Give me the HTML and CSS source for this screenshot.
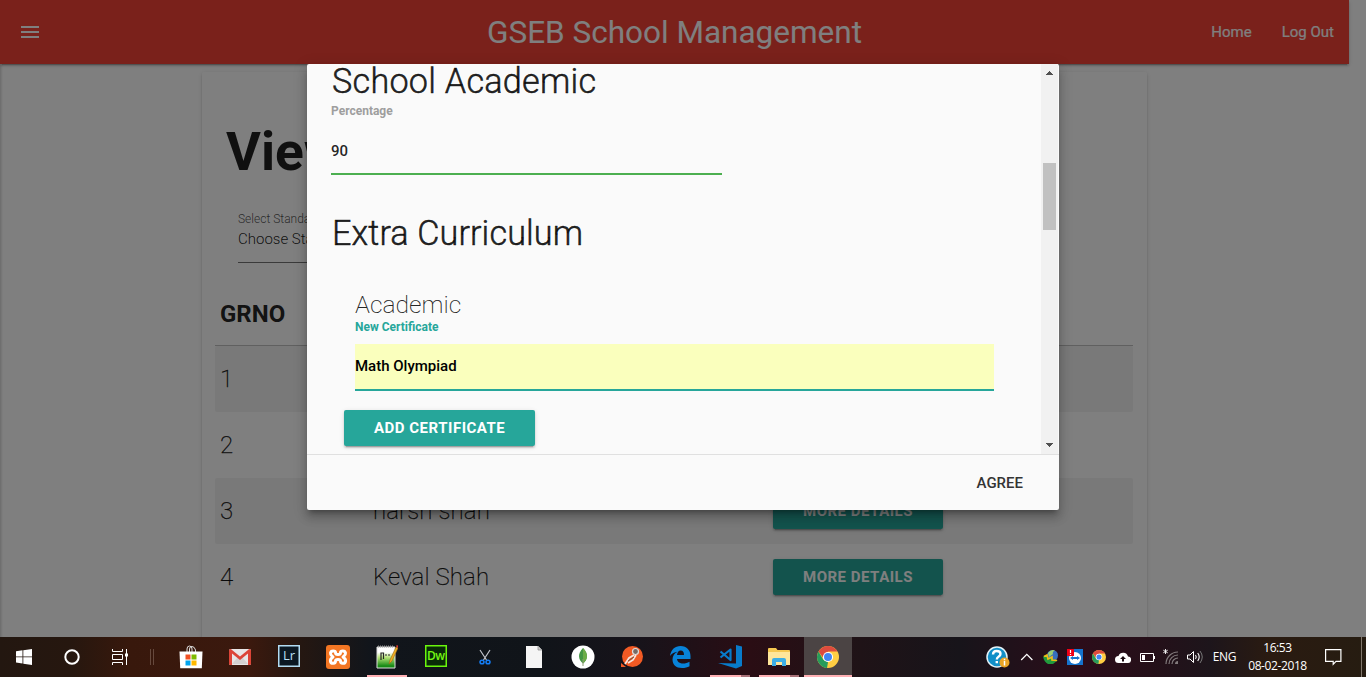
FILE: index.html
```html
<!DOCTYPE html>
<html lang="en">
<head>
<meta charset="utf-8">
<title>GSEB School Management</title>
<link rel="stylesheet" href="styles.css">
</head>
<body>
<div class="desktop">
  <div class="viewport">
    <div class="page">
      <nav class="navbar">
        <svg class="menu-icon" viewBox="0 0 18 12"><path d="M0 0h18v2H0zM0 5h18v2H0zM0 10h18v2H0z"/></svg>
        <span class="brand">GSEB School Management</span>
        <div class="nav-links"><a>Home</a><a>Log Out</a></div>
      </nav>
      <main class="card">
        <h2 class="page-title">View</h2>
        <div class="select-field">
          <label class="select-label">Select Standard</label>
          <div class="select-value">Choose Standard</div>
        </div>
        <div class="table">
          <div class="row head"><span>GRNO</span><span></span><span></span></div>
          <div class="row odd"><span>1</span><span></span><span></span></div>
          <div class="row"><span>2</span><span></span><span></span></div>
          <div class="row odd"><span>3</span><span>harsh shah</span><span><button class="btn">More Details</button></span></div>
          <div class="row"><span>4</span><span>Keval Shah</span><span><button class="btn">More Details</button></span></div>
        </div>
      </main>
    </div>
    <div class="overlay"></div>
    <section class="modal">
      <div class="modal-body">
        <div class="modal-content">
          <h4 class="section-title">School Academic</h4>
          <label class="field-label">Percentage</label>
          <div class="field valid">90</div>
          <h4 class="section-title second">Extra Curriculum</h4>
          <div class="subsection">
            <h5 class="sub-title">Academic</h5>
            <label class="field-label active">New Certificate</label>
            <div class="field autofill">Math Olympiad</div>
          </div>
          <button class="btn add">Add Certificate</button>
        </div>
        <div class="scrollbar">
          <svg class="arrow" viewBox="0 0 7 4" shape-rendering="crispEdges"><path d="M3 0h1v1h1v1h1v1h1v1H0V3h1V2h1V1h1z"/></svg>
          <div class="track"><div class="thumb"></div></div>
          <svg class="arrow" viewBox="0 0 7 4" shape-rendering="crispEdges"><path d="M0 0h7v1H6v1H5v1H4v1H3V3H2V2H1V1H0z"/></svg>
        </div>
      </div>
      <footer class="modal-footer"><span>Agree</span></footer>
    </section>
  </div>

  <div class="taskbar">
    <div class="system">
      <span class="slot"><svg width="16" height="16" viewBox="0 0 16 16" fill="#fff"><path d="M0 2.2 6.5 1.3v6.2H0zM7.3 1.2 16 0v7.5H7.300zM0 8.300h6.500v6.200L0 13.600zM7.300 8.300H16V16l-8.700-1.300z"/></svg></span>
      <span class="slot"><svg width="18" height="18" viewBox="0 0 18 18"><circle cx="9" cy="9" r="6.700" fill="none" stroke="#fff" stroke-width="2"/></svg></span>
      <span class="slot"><svg width="17" height="16" viewBox="0 0 17 16" fill="none" stroke="#fff"><path d="M.5 0v2.500h10V0M.5 16v-2.500h10V16M.5 5.500h10v5H.5zM14.500 0v16"/><path d="M13 4.500h3v3h-3z" fill="#fff" stroke="none"/></svg></span>
    </div>
    <span class="grip"></span>
    <div class="apps">
      <span class="slot"><svg width="24" height="24" viewBox="0 0 24 24"><path d="M8 7V4q0-3 2.500-3T13 4v3M10.500 7V4q0-2.500 2.500-2.500T16.500 5v2" fill="none" stroke="#ddd"/><path d="M.5 6.500h23l-.7 16.700H1.200z" fill="#fff"/><path fill="#f25022" d="M6.500 9.500h5v5h-5z"/><path fill="#7fba00" d="M12.500 9.500h5v5h-5z"/><path fill="#00a4ef" d="M6.500 15.500h5v5h-5z"/><path fill="#ffb900" d="M12.500 15.500h5v5h-5z"/></svg></span>
      <span class="slot"><svg width="22" height="16" viewBox="0 0 22 16"><rect width="22" height="16" rx="1.500" fill="#e8e6e6"/><path d="M3 15 9 8h4l6 7z" fill="#d4d1d1"/><path d="M0 1.500V15q0 1 1.200 1H3V4.500l8 6.500 8-6.500V16h1.800q1.200 0 1.200-1V1.500Q22 0 20.200 0L11 7.500 1.800 0Q0 0 0 1.500z" fill="#dc4437"/></svg></span>
      <span class="slot"><svg class="raised" width="22" height="22" viewBox="0 0 22 22"><rect x=".75" y=".75" width="20.500" height="20.500" fill="#0b1823" stroke="#b2dcf3" stroke-width="1.500"/><text x="11" y="15" class="logo-text" fill="#b9dff5">Lr</text></svg></span>
      <span class="slot"><svg width="24" height="24" viewBox="0 0 24 24"><rect width="24" height="24" rx="3" fill="#f37623"/><g fill="none" stroke="#fff" stroke-width="3" stroke-linejoin="round"><path d="M12 9.500Q9.500 9.500 9.500 7.500C9.500 5.500 5 5 4.500 8c-.3 2 1.500 3 2.500 4-1.500 1-3 2.500-2.500 4.500.8 2.800 5 2.200 5-.5Q9.500 14.500 12 14.500"/><path d="M12 9.500Q14.500 9.500 14.500 7.500C14.500 5.500 19 5 19.500 8c.3 2-1.500 3-2.500 4 1.500 1 3 2.500 2.500 4.500-.8 2.800-5 2.200-5-.5Q14.500 14.500 12 14.500"/></g></svg></span>
      <span class="slot running"><svg width="22" height="24" viewBox="0 0 22 24"><defs><linearGradient id="note" x1="0" y1="0" x2="0" y2="1"><stop offset=".25" stop-color="#fff"/><stop offset=".5" stop-color="#b5e277"/><stop offset=".9" stop-color="#188b16"/></linearGradient></defs><path d="M1 2h18v21H1z" fill="url(#note)" stroke="#ddd"/><path d="M2 1.500h16" stroke="#999" stroke-width="2" stroke-dasharray="1 1"/><path d="M5 15V8h2.500v6M9 10h2M12 10h2" fill="none" stroke="#282828" stroke-width="1.200"/><path d="m13 19 1-4 6-13 2 1-6 13z" fill="#efae23" stroke="#9b6719" stroke-width=".6"/><path d="m20 1 1-1 1.500 1-.8 2z" fill="#dc3831"/></svg></span>
      <span class="slot"><svg class="raised" width="22" height="22" viewBox="0 0 22 22"><rect x=".75" y=".75" width="20.500" height="20.500" fill="#092b08" stroke="#6af50c" stroke-width="1.500"/><text x="10.700" y="15" class="logo-text dw" fill="#74f813">Dw</text></svg></span>
      <span class="slot"><svg width="12" height="16" viewBox="0 0 12 16"><path d="m1 1 6.500 10M11 1 4.500 11" stroke="#c2c4cc" stroke-width="1.200"/><ellipse cx="3" cy="13" rx="2" ry="1.800" fill="none" stroke="#147df6" stroke-width="1.500"/><ellipse cx="9" cy="13" rx="2" ry="1.800" fill="none" stroke="#147df6" stroke-width="1.500"/></svg></span>
      <span class="slot"><svg width="16" height="22" viewBox="0 0 16 22"><path d="M0 0h12l4 4v18H0z" fill="#f5f5f5"/><path d="M12 0v4h4" fill="#ccc" stroke="#888" stroke-width=".7"/></svg></span>
      <span class="slot"><svg width="24" height="24" viewBox="0 0 24 24"><circle cx="12" cy="12" r="11.500" fill="#fff"/><path d="M12 3c-6 6-4.500 12 0 15.500C16.500 15 18 9 12 3z" fill="#449544"/><path d="M12 3c6 6 4.500 12 0 15.500z" fill="#6cac48"/><path d="M12 14v7" stroke="#8c9b72"/></svg></span>
      <span class="slot"><svg width="24" height="24" viewBox="0 0 24 24"><circle cx="12.500" cy="11.500" r="10.500" fill="#f15a24"/><path d="m1 18 5 4H1z" fill="#f15a24"/><circle cx="15.500" cy="6.500" r="3" fill="#776a64" stroke="#ddd" stroke-width="1.200"/><path d="m14 10-5 3-4 6M16 10l-3 5-5 3" fill="none" stroke="#f3e6df" stroke-width="1.700"/><path d="m8 16 6-4" stroke="#6d5a50"/></svg></span>
      <span class="slot"><svg width="21" height="22" viewBox="0 0 21 22"><path d="M0 10C1 3.500 5 0 10.500 0 17 0 20.500 4.500 20.500 10v3H7c.3 3 3 4.500 6 4.500 2.500 0 4.500-.6 6.500-1.800v4.500C17.500 21.400 15 22 12 22 6 22 2.500 18.500 2.500 13.500c0-3.500 2-6.300 5-7.700C4.500 6 1.800 7.500 0 10zm7-1h7c0-3-1-4.500-3.300-4.500C8.600 4.500 7.300 6.500 7 9z" fill="#0883d9"/></svg></span>
      <span class="slot running split"><svg width="24" height="24" viewBox="0 0 24 24"><path d="M18 0v18.500L0 18l18 5.500 6-2.500V1.500z" fill="#087bcb"/><path d="m2.500 6.500 10 8.500V4.500l-10 8" fill="none" stroke="#087bcb" stroke-width="2.200" stroke-linejoin="round"/></svg></span>
      <span class="slot running split"><svg width="22" height="18" viewBox="0 0 22 18"><path d="M0 1q0-1 1-1h7l1.500 2H21q1 0 1 1v14H0z" fill="#f6c851"/><path d="M0 4h22v13H0z" fill="#ffe69b"/><path d="M4 18v-6q0-2 2-2h10q2 0 2 2v6h-4v-4H8v4z" fill="#3daee5"/></svg></span>
      <span class="slot running focused"><svg width="22" height="22" viewBox="0 0 22 22"><use href="#chrome"/></svg></span>
    </div>

    <div class="tray">
      <span class="tray-icon help"><svg width="24" height="22" viewBox="0 0 24 22"><circle cx="11" cy="11" r="10" fill="#118fc8" stroke="#e3f2f8" stroke-width="1.500"/><path d="M7 8.500Q7 5 10.700 5 14.500 5 14.500 8q0 1.500-2 2.700-1.700 1-1.700 2.800M10.800 15v2.300" fill="none" stroke="#fff" stroke-width="2.400"/><circle cx="18.500" cy="16.500" r="5" fill="#eba425"/><path d="M18.500 15v4.500M18.500 12.700v1.500" stroke="#fff" stroke-width="1.500"/></svg></span>
      <span class="tray-icon"><svg width="14" height="8" viewBox="0 0 14 8"><path d="m1.200 7 5.600-5.600L12.400 7" fill="none" stroke="#fff" stroke-width="1.300"/></svg></span>
      <span class="tray-icon"><svg width="16" height="15" viewBox="0 0 16 15"><circle cx="9.500" cy="5.500" r="5.500" fill="#3770bc"/><path d="M5 3q3-4 7-2.500-3 1-2 3.500L6 7z" fill="#9bcf70"/><path d="M0 6.500 4 5l1 3 4-1v2.500l6 .5-5 4H5Q1 12 0 6.500z" fill="#219b3d"/><path d="M1 6.500 4 5l1 4 4-2v3l5 .5" fill="none" stroke="#edbd19" stroke-width="1.700"/></svg></span>
      <span class="tray-icon"><svg width="16" height="16" viewBox="0 0 16 16"><rect width="16" height="16" fill="#1574ce"/><circle cx="8" cy="9" r="6" fill="#fff"/><path d="m3 9 3-2v1h4V7l3 2-3 2v-1H6v1z" fill="#1574ce"/><path d="M0 0h7v7H0z" fill="#f00015"/><path d="M3.500 1v3M3.500 5v1" stroke="#fff" stroke-width="1.200"/></svg></span>
      <span class="tray-icon"><svg width="14" height="14" viewBox="0 0 22 22"><g id="chrome"><circle cx="11" cy="11" r="11" fill="#ffce43"/><path d="M1.500 5.500A11 11 0 0 1 20.500 5.500H11L7 13z" fill="#dd4b3e"/><path d="M1.500 5.500 6.300 13.700 11 16.300 10 22A11 11 0 0 1 1.500 5.500z" fill="#279b5c"/><circle cx="11" cy="11" r="5.100" fill="#fff"/><circle cx="11" cy="11" r="4" fill="#4285f4"/></g></svg></span>
      <span class="tray-icon"><svg width="16" height="11" viewBox="0 0 16 11"><path d="M3.500 11a3.500 3.500 0 0 1 0-7A5 5 0 0 1 13 4.500 3.200 3.200 0 0 1 12.700 11z" fill="#fff"/><path d="M7 9.500V7H5l3-3 3 3H9v2.500z" fill="#1c0c12"/></svg></span>
      <span class="tray-icon"><svg width="15" height="9" viewBox="0 0 15 9"><path d="M.5.5h13v8H.5z" fill="none" stroke="#fff"/><path d="M2 2h3v5H2zM13.500 3H15v3h-1.500z" fill="#fff"/></svg></span>
      <span class="tray-icon"><svg width="16" height="16" viewBox="0 0 16 16"><g fill="none" stroke="#827a7c" stroke-width="1.200"><path d="M3 15A12 12 0 0 1 15 3M6 15a9 9 0 0 1 9-9M9 15a6 6 0 0 1 6-6"/></g><path d="M12 15a3 3 0 0 1 3-3v3z" fill="#827a7c"/><path d="M2.500 0v5M.3 1.200l4.400 2.600M4.700 1.200.3 3.800" stroke="#fff" stroke-width=".9"/></svg></span>
      <span class="tray-icon"><svg width="17" height="14" viewBox="0 0 17 14"><path d="M.5 5h2.500l3.500-3.500v11L3 9H.5z" fill="none" stroke="#fff"/><path d="M8.500 5q1.500 2 0 4M10.700 3q3 4 0 8" fill="none" stroke="#fff" stroke-width="1.100"/><path d="M13 1q4.500 6 0 12" fill="none" stroke="#777"/></svg></span>
      <span class="lang">ENG</span>
      <span class="clock"><span>16:53</span><span>08-02-2018</span></span>
      <span class="notify"><svg width="17" height="17" viewBox="0 0 17 17"><path d="M.6.6h15.300v11.800H11L8.200 15.300V12.400H.6z" fill="none" stroke="#fff" stroke-width="1.200"/></svg></span>
    </div>
  </div>
</div>
</body>
</html>
```
FILE: styles.css
```css
* { box-sizing: border-box; }
body { margin: 0; font-family: Roboto, "Liberation Sans", sans-serif; font-size: 15px; color: rgba(0,0,0,.87); overflow: hidden; }
h2, h4, h5 { margin: 0; font-weight: 400; }
.desktop { display: flex; flex-direction: column; width: 1366px; height: 677px; }
.viewport { position: relative; flex: none; height: 637px; overflow: hidden; background: #fff; }

.page { width: 1349px; height: 637px; box-shadow: inset 3px 0 3px -2px rgba(0,0,0,.2); }
.navbar { display: grid; grid-template-columns: 250px 1fr 250px; align-items: center; height: 64px; background: #f44336; color: #fff; box-shadow: 0 2px 2px rgba(0,0,0,.14), 0 1px 5px rgba(0,0,0,.12), 0 3px 1px -2px rgba(0,0,0,.2); }
.menu-icon { width: 18px; height: 12px; margin-left: 21px; fill: #fff; }
.brand { text-align: center; font-size: 31.5px; }
.nav-links { display: flex; justify-content: flex-end; gap: 30px; padding-right: 15px; -webkit-text-stroke: .2px; }

.card { width: 945px; height: 700px; margin: 8px auto 0; padding: 48px 14px 0 13px; border-radius: 2px; box-shadow: 0 2px 2px rgba(0,0,0,.14), 0 1px 5px rgba(0,0,0,.12), 0 3px 1px -2px rgba(0,0,0,.2); }
.page-title { padding-left: 11px; font-size: 53.4px; line-height: 64px; font-weight: 700; }
.select-field { width: 300px; margin: 28px 0 0 23px; }
.select-label { display: block; height: 4px; font-size: 12px; line-height: 14px; font-weight: 300; color: rgba(0,0,0,.7); }
.select-value { height: 47px; line-height: 47px; font-weight: 300; border-bottom: 1px solid #757575; }
.table { margin-top: 19px; }
.row { display: grid; grid-template-columns: 153px 400px 1fr; align-items: center; height: 66px; font-size: 24px; font-weight: 200; }
.row > span { padding-left: 5px; display: flex; line-height: 28px; }
.row:not(.head) > span:not(:has(.btn)) { padding-bottom: 1px; -webkit-text-stroke: .25px; letter-spacing: .1px; }
.row.head { height: 64px; font-weight: 700; border-bottom: 1px solid #c0c0c0; }
.row.head > span { padding-top: 1px; }
.row.odd { background: #f2f2f2; border-radius: 2px; }

.btn { height: 36px; padding: 0 30px; border: 0; border-radius: 2px; background: #26a69a; color: #fff; font: 700 15px/36px Roboto, sans-serif; letter-spacing: .5px; text-transform: uppercase; white-space: nowrap; box-shadow: 0 2px 2px rgba(0,0,0,.14), 0 1px 5px rgba(0,0,0,.12), 0 3px 1px -2px rgba(0,0,0,.2); }
.row .btn { width: 170px; }

.overlay { position: absolute; inset: 0; background: rgba(0,0,0,.5); }
.modal { position: absolute; top: 64px; left: 307px; width: 752px; height: 446px; display: flex; flex-direction: column; background: #fafafa; border-radius: 2px; box-shadow: 0 8px 10px 1px rgba(0,0,0,.14), 0 3px 14px 2px rgba(0,0,0,.12), 0 5px 5px -3px rgba(0,0,0,.3); }
.modal-body { display: flex; height: 390px; padding-right: 1px; }
.modal-content { flex: 1; padding-left: 24px; }
.section-title { padding-left: 1px; font-size: 34.2px; line-height: 34px; margin-bottom: -2px; font-weight: 300; letter-spacing: .25px; -webkit-text-stroke: .5px; }
.section-title.second { line-height: 40px; margin-top: 38px; letter-spacing: .1px; }
.field-label { display: block; margin-top: 8px; font-size: 12px; line-height: 14px; font-weight: 700; color: #9e9e9e; }
.field-label.active { margin-top: 2px; color: #26a69a; }
.field { width: 391px; height: 47px; margin-top: 10px; line-height: 45px; font-weight: 500; border-bottom: 2px solid #4caf50; }
.field.valid { line-height: 47px; }
.subsection { margin: 39px 0 0 24px; }
.sub-title { margin-bottom: -1px; font-size: 24.6px; line-height: 29px; font-weight: 200; }
.field.autofill { width: 639px; background: #faffbd; border-bottom-color: #26a69a; color: #000; }
.btn.add { display: block; width: 191px; margin: 19px 0 0 13px; }
.scrollbar { width: 17px; display: flex; flex-direction: column; align-items: center; padding: 7px 0; background: #f1f1f1; }
.arrow { width: 7px; height: 4px; fill: #505050; }
.track { flex: 1; padding-top: 88px; }
.thumb { width: 13px; height: 67px; background: #c1c1c1; }
.modal-footer { display: flex; align-items: center; justify-content: flex-end; height: 56px; padding-right: 36px; border-top: 1px solid #e0e0e0; color: #343434; font-weight: 500; text-transform: uppercase; }

.taskbar { display: flex; height: 40px; color: #fff; background: linear-gradient(90deg, #231710 0, #26170f 70px, #38180c 130px, #3b190e 250px, #251711 300px, #11151b 370px, #101419 540px, #17131a 640px, #2a0d14 750px, #1f1317 860px, #17141a 960px, #2c0d1a 1080px, #251019 1150px, #1d151b 1210px, #2a1b11 1270px, #261c11 1366px); }
.system, .apps, .tray { display: flex; }
.slot { position: relative; display: flex; align-items: center; justify-content: center; width: 48px; height: 40px; }
.raised { margin-bottom: 2px; }
.grip { width: 4px; height: 16px; margin: 12px 12px 0 6px; border: solid #66493d; border-width: 0 1px; }
.apps .slot { width: 49px; }
.running::after { content: ""; position: absolute; left: 5px; bottom: 0; width: 40px; height: 2px; background: #ffb0b4; }
.running.split::after { background: linear-gradient(90deg, #ffb0b4 31px, #a97279 31px); }
.apps .focused { width: 48px; margin-left: 1px; background: #4b4444; }
.running.focused::after { left: 0; width: 48px; }
.logo-text { font: 500 13px "Open Sans", sans-serif; text-anchor: middle; }
.logo-text.dw { font-size: 12px; font-weight: 600; letter-spacing: -.5px; }
.tray { margin-left: auto; padding-right: 7px; margin-right: 4px; border-right: 1px solid #80766b; }
.tray-icon { width: 24px; display: flex; align-items: center; justify-content: center; }
.tray-icon.help { width: 34px; }
.lang { width: 35px; font: 12px/40px "Open Sans", sans-serif; text-align: center; letter-spacing: -.3px; }
.clock { width: 70px; display: flex; flex-direction: column; align-items: center; padding: 2px 0 0 1px; font: 12px/18px "Open Sans", sans-serif; letter-spacing: -.4px; }
.notify { width: 42px; display: flex; align-items: center; justify-content: center; }
```
